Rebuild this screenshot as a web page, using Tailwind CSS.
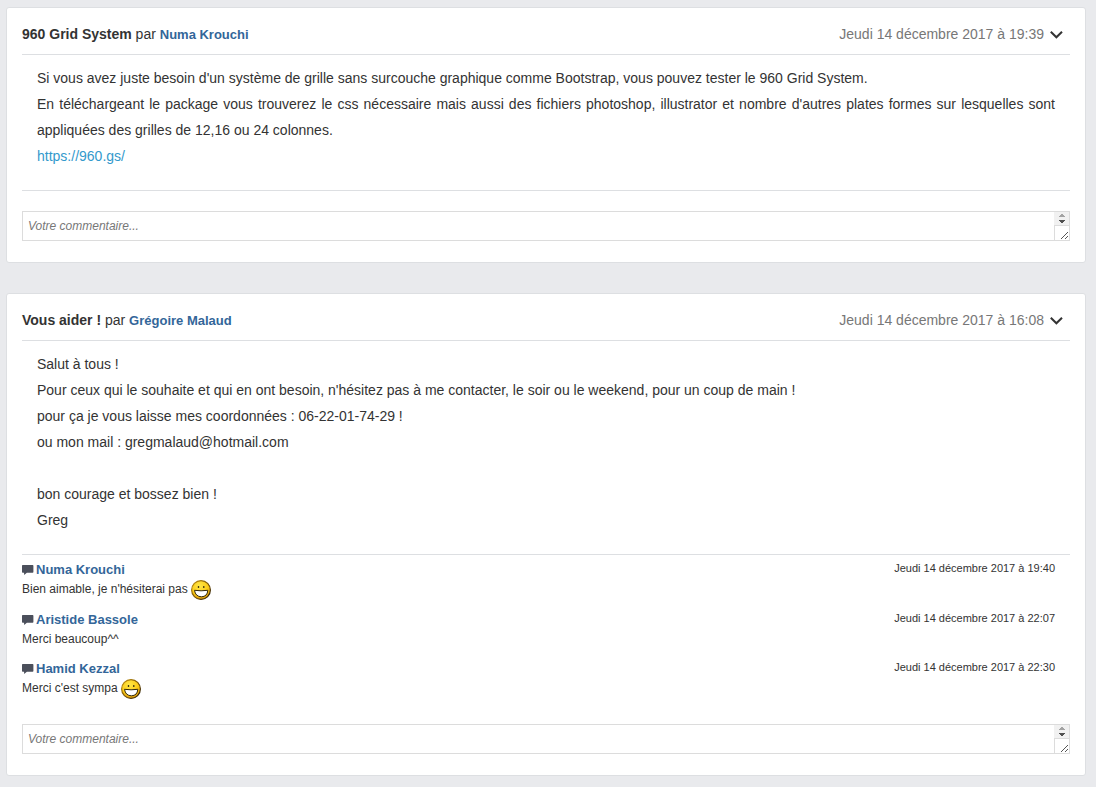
<!DOCTYPE html>
<html lang="fr">
<head>
<meta charset="utf-8">
<title>Publications</title>
<script src="https://cdn.jsdelivr.net/npm/@tailwindcss/browser@4"></script>
</head>
<body class="bg-[#e9eaed] font-['Liberation_Sans',Arial,sans-serif] text-sm text-[#333]">
<svg class="absolute size-0" aria-hidden="true">
  <defs>
    <radialGradient id="face" cx="42%" cy="28%" r="75%">
      <stop offset="0" stop-color="#ffe748"/><stop offset=".6" stop-color="#fccb16"/><stop offset="1" stop-color="#d99408"/>
    </radialGradient>
    <linearGradient id="rim" x1="0" y1="0" x2="1" y2="1">
      <stop offset="0" stop-color="#c99710"/><stop offset=".6" stop-color="#6b4a08"/><stop offset="1" stop-color="#1d1505"/>
    </linearGradient>
    <symbol id="chevron" viewBox="0 0 14 10"><path d="M.8 2.700 6.400 8.300 12 2.700" fill="none" stroke="#333" stroke-width="2"/></symbol>
    <symbol id="bubble" viewBox="0 0 12 11"><path d="M.7 0h10q.7 0 .7.7v6.300q0 .7-.7.7H4.900L2.100 9.900V7.700H.7Q0 7.700 0 7V.7Q0 0 .7 0z" fill="#4b4f5b"/></symbol>
    <symbol id="smiley" viewBox="0 0 20 20">
      <circle cx="10" cy="10" r="9.400" fill="url(#face)" stroke="url(#rim)" stroke-width="1.200"/>
      <ellipse cx="7.500" cy="7" rx=".8" ry="1.100" fill="#33290c"/><ellipse cx="12.800" cy="7" rx=".8" ry="1.100" fill="#33290c"/>
      <path d="M3.500 10.300Q10 11.300 16.800 10.300 16.400 16.600 10.400 16.800 4.400 16.600 3.500 10.300z" fill="#fff" stroke="#33290c" stroke-width="1" stroke-linejoin="round"/>
    </symbol>
    <symbol id="grip" viewBox="0 0 16 30">
      <path d="M0 0h16v14H0z" fill="#f1f1f1"/><path d="M0 14h16v16H0z" fill="#dcdcdc"/><path d="M1 15h14v14H1z" fill="#fff"/>
      <path d="M7 3h2v1h1v1h1v1H5V5h1V4h1z" fill="#a3a3a3"/>
      <path d="M5 9h6v1h-1v1H9v1H7v-1H6v-1H5z" fill="#505050"/>
      <path d="M7 27h1v1H7zM8 26h1v1H8zM9 25h1v1H9zM10 24h1v1h-1zM11 23h1v1h-1zM12 22h1v1h-1zM13 21h1v1h-1zM11 27h1v1h-1zM12 26h1v1h-1zM13 25h1v1h-1z" fill="#555"/>
    </symbol>
  </defs>
</svg>
<main class="flex flex-col gap-[30px] pt-[7px] pr-[10px] pb-[11px] pl-[6px]">
  <article class="rounded-[3px] border border-[#dddfe2] bg-white px-[15px] pb-[21px]">
    <header class="flex h-[47px] items-center justify-between border-b border-[#dddfe2] pt-[6px] pr-[6px]">
      <h2><strong>960 Grid System</strong> par <a href="#" class="text-[13px] font-bold text-[#336699]">Numa Krouchi</a></h2>
      <div class="flex items-center gap-[6px] text-[#777]"><time>Jeudi 14 décembre 2017 à 19:39</time>
        <button aria-label="Options"><svg class="h-[10px] w-[14px]"><use href="#chevron"/></svg></button></div>
    </header>
    <div class="border-b border-[#dddfe2] px-[15px] pt-[10px] pb-[21px] text-justify leading-[26px]">
      <p>Si vous avez juste besoin d'un système de grille sans surcouche graphique comme Bootstrap, vous pouvez tester le 960 Grid System.</p>
      <p>En téléchargeant le package vous trouverez le css nécessaire mais aussi des fichiers photoshop, illustrator et nombre d'autres plates formes sur lesquelles sont appliquées des grilles de 12,16 ou 24 colonnes.</p>
      <p><a href="https://960.gs/" class="text-[#3399cc]">https://960.gs/</a></p>
    </div>
    <div class="relative mt-5">
      <textarea aria-label="Votre commentaire" placeholder="Votre commentaire..." class="block h-[30px] w-full resize-none overflow-hidden border border-[#dcdcdc] px-[5px] py-[5px] text-xs leading-[18px] placeholder:text-[#777] placeholder:italic"></textarea>
      <svg class="pointer-events-none absolute top-0 right-0 h-[30px] w-4"><use href="#grip"/><path d="M0 0H16V30" fill="none" stroke="#dcdcdc" stroke-width="2"/></svg>
    </div>
  </article>

  <article class="rounded-[3px] border border-[#dddfe2] bg-white px-[15px] pb-[21px]">
    <header class="flex h-[47px] items-center justify-between border-b border-[#dddfe2] pt-[6px] pr-[6px]">
      <h2><strong>Vous aider !</strong> par <a href="#" class="text-[13px] font-bold text-[#336699]">Grégoire Malaud</a></h2>
      <div class="flex items-center gap-[6px] text-[#777]"><time>Jeudi 14 décembre 2017 à 16:08</time>
        <button aria-label="Options"><svg class="h-[10px] w-[14px]"><use href="#chevron"/></svg></button></div>
    </header>
    <div class="border-b border-[#dddfe2] px-[15px] pt-[10px] pb-[21px] leading-[26px]">
      <p>Salut à tous !<br>Pour ceux qui le souhaite et qui en ont besoin, n'hésitez pas à me contacter, le soir ou le weekend, pour un coup de main !<br>pour ça je vous laisse mes coordonnées : 06-22-01-74-29 !<br>ou mon mail : gregmalaud@hotmail.com</p>
      <p class="mt-[26px]">bon courage et bossez bien !<br>Greg</p>
    </div>
    <ul class="flex flex-col gap-[10px] pt-[5px]">
      <li>
        <div class="flex h-[19px] items-start justify-between pr-[15px]">
          <div class="flex items-center gap-[2px] leading-5"><svg class="h-[11px] w-3"><use href="#bubble"/></svg><a href="#" class="text-[13px] font-bold text-[#336699]">Numa Krouchi</a></div>
          <time class="text-[11px] leading-4">Jeudi 14 décembre 2017 à 19:40</time>
        </div>
        <p class="flex h-[21px] items-start gap-[3px] text-xs leading-5">Bien aimable, je n'hésiterai pas <svg class="mt-px size-5" role="img" aria-label="Sourire"><use href="#smiley"/></svg></p>
      </li>
      <li>
        <div class="flex h-[19px] items-start justify-between pr-[15px]">
          <div class="flex items-center gap-[2px] leading-5"><svg class="h-[11px] w-3"><use href="#bubble"/></svg><a href="#" class="text-[13px] font-bold text-[#336699]">Aristide Bassole</a></div>
          <time class="text-[11px] leading-4">Jeudi 14 décembre 2017 à 22:07</time>
        </div>
        <p class="text-xs leading-5">Merci beaucoup^^</p>
      </li>
      <li>
        <div class="flex h-[19px] items-start justify-between pr-[15px]">
          <div class="flex items-center gap-[2px] leading-5"><svg class="h-[11px] w-3"><use href="#bubble"/></svg><a href="#" class="text-[13px] font-bold text-[#336699]">Hamid Kezzal</a></div>
          <time class="text-[11px] leading-4">Jeudi 14 décembre 2017 à 22:30</time>
        </div>
        <p class="flex h-[21px] items-start gap-[3px] text-xs leading-5">Merci c'est sympa <svg class="mt-px size-5" role="img" aria-label="Sourire"><use href="#smiley"/></svg></p>
      </li>
    </ul>
    <div class="relative mt-[25px]">
      <textarea aria-label="Votre commentaire" placeholder="Votre commentaire..." class="block h-[30px] w-full resize-none overflow-hidden border border-[#dcdcdc] px-[5px] py-[5px] text-xs leading-[18px] placeholder:text-[#777] placeholder:italic"></textarea>
      <svg class="pointer-events-none absolute top-0 right-0 h-[30px] w-4"><use href="#grip"/><path d="M0 0H16V30" fill="none" stroke="#dcdcdc" stroke-width="2"/></svg>
    </div>
  </article>
</main>
</body>
</html>
